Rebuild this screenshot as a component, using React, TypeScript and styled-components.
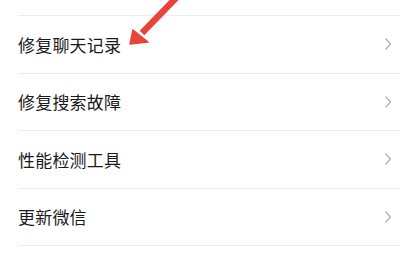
import React from 'react';
import styled, { createGlobalStyle } from 'styled-components';

const items = ['修复聊天记录', '修复搜索故障', '性能检测工具', '更新微信'];

const GlobalStyle = createGlobalStyle`
  html, body {
    margin: 0;
    padding: 0;
    background: #ffffff;
  }
  body {
    font-family: "Noto Sans CJK SC", "Noto Sans", sans-serif;
  }
`;

const Page = styled.div`
  position: relative;
  width: 400px;
  height: 260px;
  overflow: hidden;
  background: #ffffff;
`;

const List = styled.ul`
  list-style: none;
  margin: 0;
  padding: 15px 0 0 18px;
`;

const Row = styled.li`
  display: flex;
  align-items: center;
  justify-content: space-between;
  height: 56.5px;
  padding-right: 8px;
  border-top: 1px solid #ededed;
`;

const Label = styled.span`
  font-size: 17px;
  color: #1b1b1b;
  letter-spacing: 0.2px;
`;

const Chevron = styled.svg`
  width: 8px;
  height: 14px;
  flex-shrink: 0;
`;

const Arrow = styled.svg`
  position: absolute;
  left: 120px;
  top: 0;
  width: 70px;
  height: 52px;
  pointer-events: none;
`;

const App = () => (
  <Page>
    <GlobalStyle />
    <List>
      {items.map(name => (
        <Row key={name}>
          <Label>{name}</Label>
          <Chevron viewBox="0 0 8 14">
            <polyline points="1.5,1.5 6.5,7 1.5,12.5" fill="none" stroke="#b3b3b3" strokeWidth="1.3" />
          </Chevron>
        </Row>
      ))}
      <Row />
    </List>
    <Arrow viewBox="0 0 70 52">
      <line x1="57" y1="-3" x2="22" y2="33" stroke="#e8443a" strokeWidth="6.5" />
      <polygon points="10,44 13,30 28,42" fill="#e8443a" stroke="#e8443a" strokeWidth="1.5" strokeLinejoin="round" />
    </Arrow>
  </Page>
);

export default App;
